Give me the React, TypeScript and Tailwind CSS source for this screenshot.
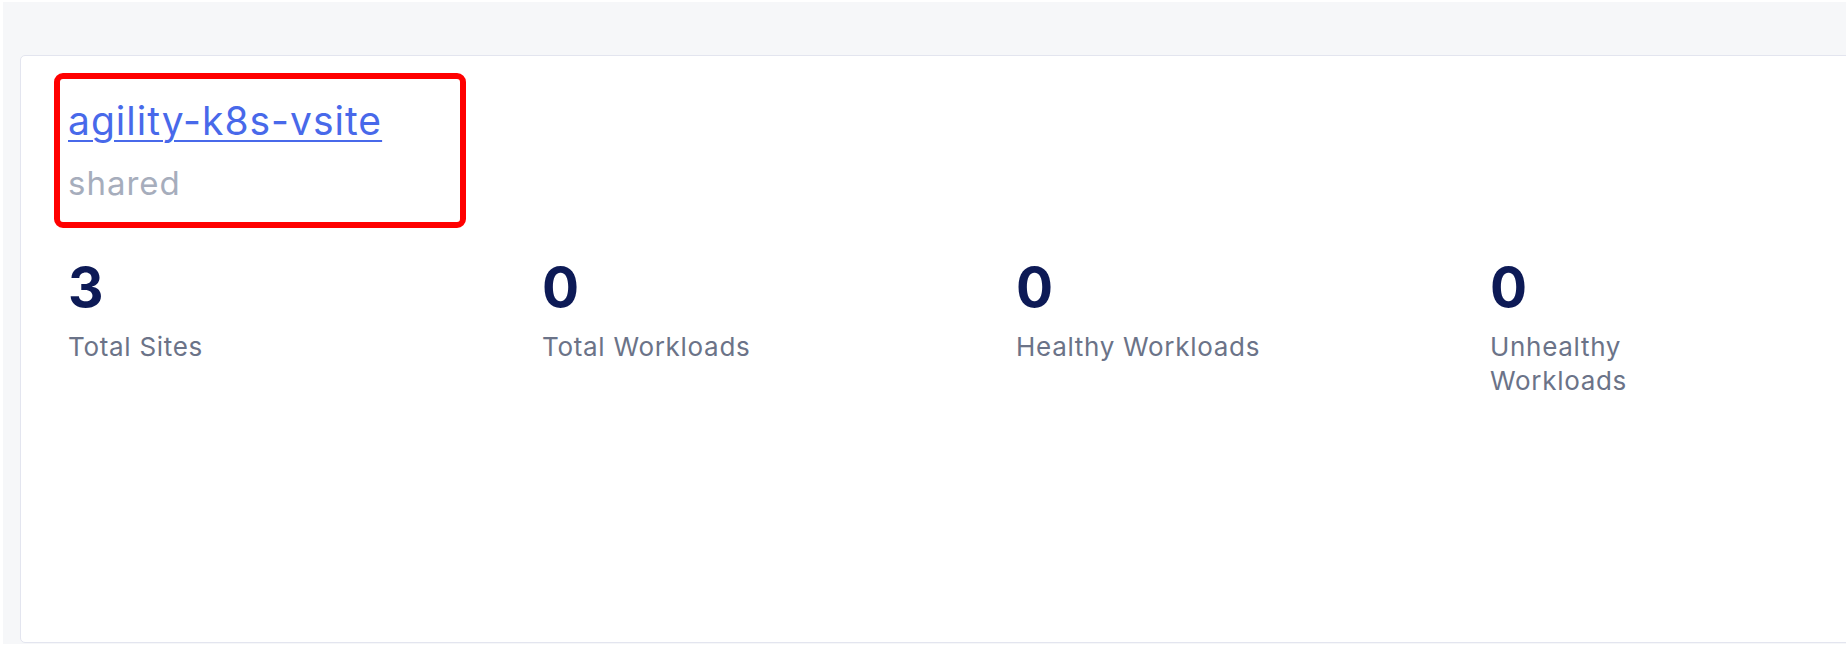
const stats = [
  { value: 3, label: 'Total Sites', width: 'w-[474px]' },
  { value: 0, label: 'Total Workloads', width: 'w-[474px]' },
  { value: 0, label: 'Healthy Workloads', width: 'w-[474px]' },
  { value: 0, label: 'Unhealthy Workloads', width: 'w-[250px]' },
];

export default function App() {
  return (
    <div
      className="w-[1847px] h-[646px] bg-white pt-[2px] pl-[3px] pr-[1px] pb-[2px] overflow-hidden"
      style={{ fontFamily: 'Inter, "Noto Sans", sans-serif' }}
    >
      <div className="h-full bg-[#f6f7f9] pt-[53px] pl-[17px] overflow-hidden">
        {/* Site card, wider than the viewport */}
        <div className="w-[2100px] h-[588px] bg-white border border-[#e3e5ef] rounded-[5px] pl-[47px] pt-[17px]">
          {/* Highlighted header */}
          <div className="-ml-[14px] w-[412px] h-[155px] border-[6px] border-[#ff0000] rounded-[9px] px-[8px] pt-[18px]">
            <a
              href="#"
              className="block text-[39px] leading-[48px] tracking-[1px] text-[#4869ea] underline decoration-[2px] underline-offset-[5px]"
            >
              agility-k8s-vsite
            </a>
            <div className="mt-[18px] text-[33px] leading-[40px] tracking-[1px] text-[#a6adbc]">shared</div>
          </div>

          {/* Stats row */}
          <div className="mt-[32px] flex">
            {stats.map((s) => (
              <div key={s.label} className={`${s.width} shrink-0`}>
                <div className="text-[55px] leading-[55px] font-bold text-[#0d1a56]">{s.value}</div>
                <div className="mt-[15px] text-[26px] leading-[34px] tracking-[0.7px] text-[#6b7388]">
                  {s.label}
                </div>
              </div>
            ))}
          </div>
        </div>
      </div>
    </div>
  );
}
